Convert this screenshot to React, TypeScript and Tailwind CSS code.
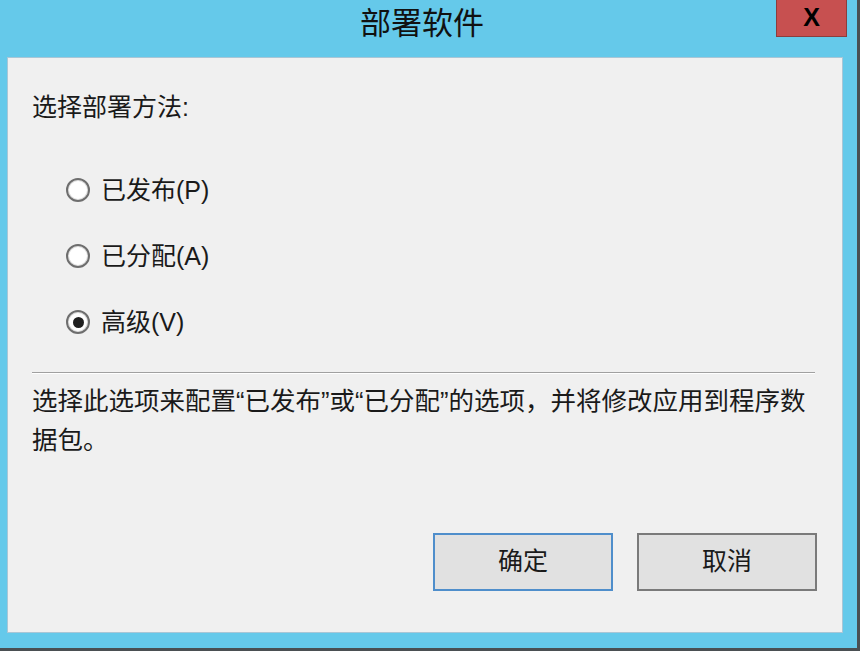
import React, { useState } from "react";

const options = [
    { value: "published", label: "已发布(P)" },
    { value: "assigned", label: "已分配(A)" },
    { value: "advanced", label: "高级(V)" },
];

const RadioRow: React.FC<{ label: string; checked: boolean; onSelect: () => void }> = ({ label, checked, onSelect }) => (
    <label className="h-[66px] flex items-center gap-[11px] cursor-default" onClick={onSelect}>
        <span className="w-[24px] h-[24px] rounded-full border-2 border-[#6e6e6e] bg-white flex items-center justify-center shadow-[inset_0_0_0_1px_#dcdcdc]">
            {checked && <span className="w-[11px] h-[11px] rounded-full bg-[#1f1f1f]"></span>}
        </span>
        <span className="leading-[30px]">{label}</span>
    </label>
);

export default function App() {
    const [method, setMethod] = useState("advanced");

    return (
        <div className="w-[860px] h-[651px] bg-[#65c9ea] border-r-[3px] border-b-[3px] border-[#4a4f52] flex flex-col pl-[7px] pr-[14px] pb-[15px] text-[#1a1a1a] font-['Liberation_Sans','Noto_Sans_CJK_SC',sans-serif]">
            {/* title bar */}
            <div className="relative h-[57px] shrink-0 -ml-[7px] -mr-[14px] pr-[13px] flex justify-center pt-[8px]">
                <span className="text-[31px] leading-[31px] text-[#111]">部署软件</span>
                <button className="absolute top-0 right-[10px] w-[71px] h-[37px] bg-[#c75050] border border-t-0 border-[#8c3d3d] flex justify-center pt-[3px]">
                    <span className="text-[25px] leading-[28px] font-bold text-black">X</span>
                </button>
            </div>

            {/* client area */}
            <div className="flex-1 bg-[#f0f0f0] border border-[#a9c6d6] flex flex-col px-[24px]">
                <div className="pt-[34px] text-[25px] leading-[30px]">选择部署方法:</div>

                <div className="mt-[35px] pl-[34px] flex flex-col text-[25px]">
                    {options.map((o) => (
                        <RadioRow key={o.value} label={o.label} checked={method === o.value} onSelect={() => setMethod(o.value)} />
                    ))}
                </div>

                <div className="mt-[17px] mr-[3px] border-t border-[#a0a0a0] border-b border-b-white"></div>

                <p className="mt-[8px] text-[25.5px] leading-[39px] whitespace-nowrap">
                    选择此选项来配置“已发布”或“已分配”的选项，并将修改应用到程序数<br />据包。
                </p>

                <div className="mt-auto mb-[41px] flex justify-end gap-[24px] pr-[1px]">
                    <button className="w-[180px] h-[58px] bg-[#e1e1e1] border-2 border-[#4f8ecb] text-[25px]">确定</button>
                    <button className="w-[180px] h-[58px] bg-[#e1e1e1] border-2 border-[#7a7a7a] text-[25px]">取消</button>
                </div>
            </div>
        </div>
    );
}
